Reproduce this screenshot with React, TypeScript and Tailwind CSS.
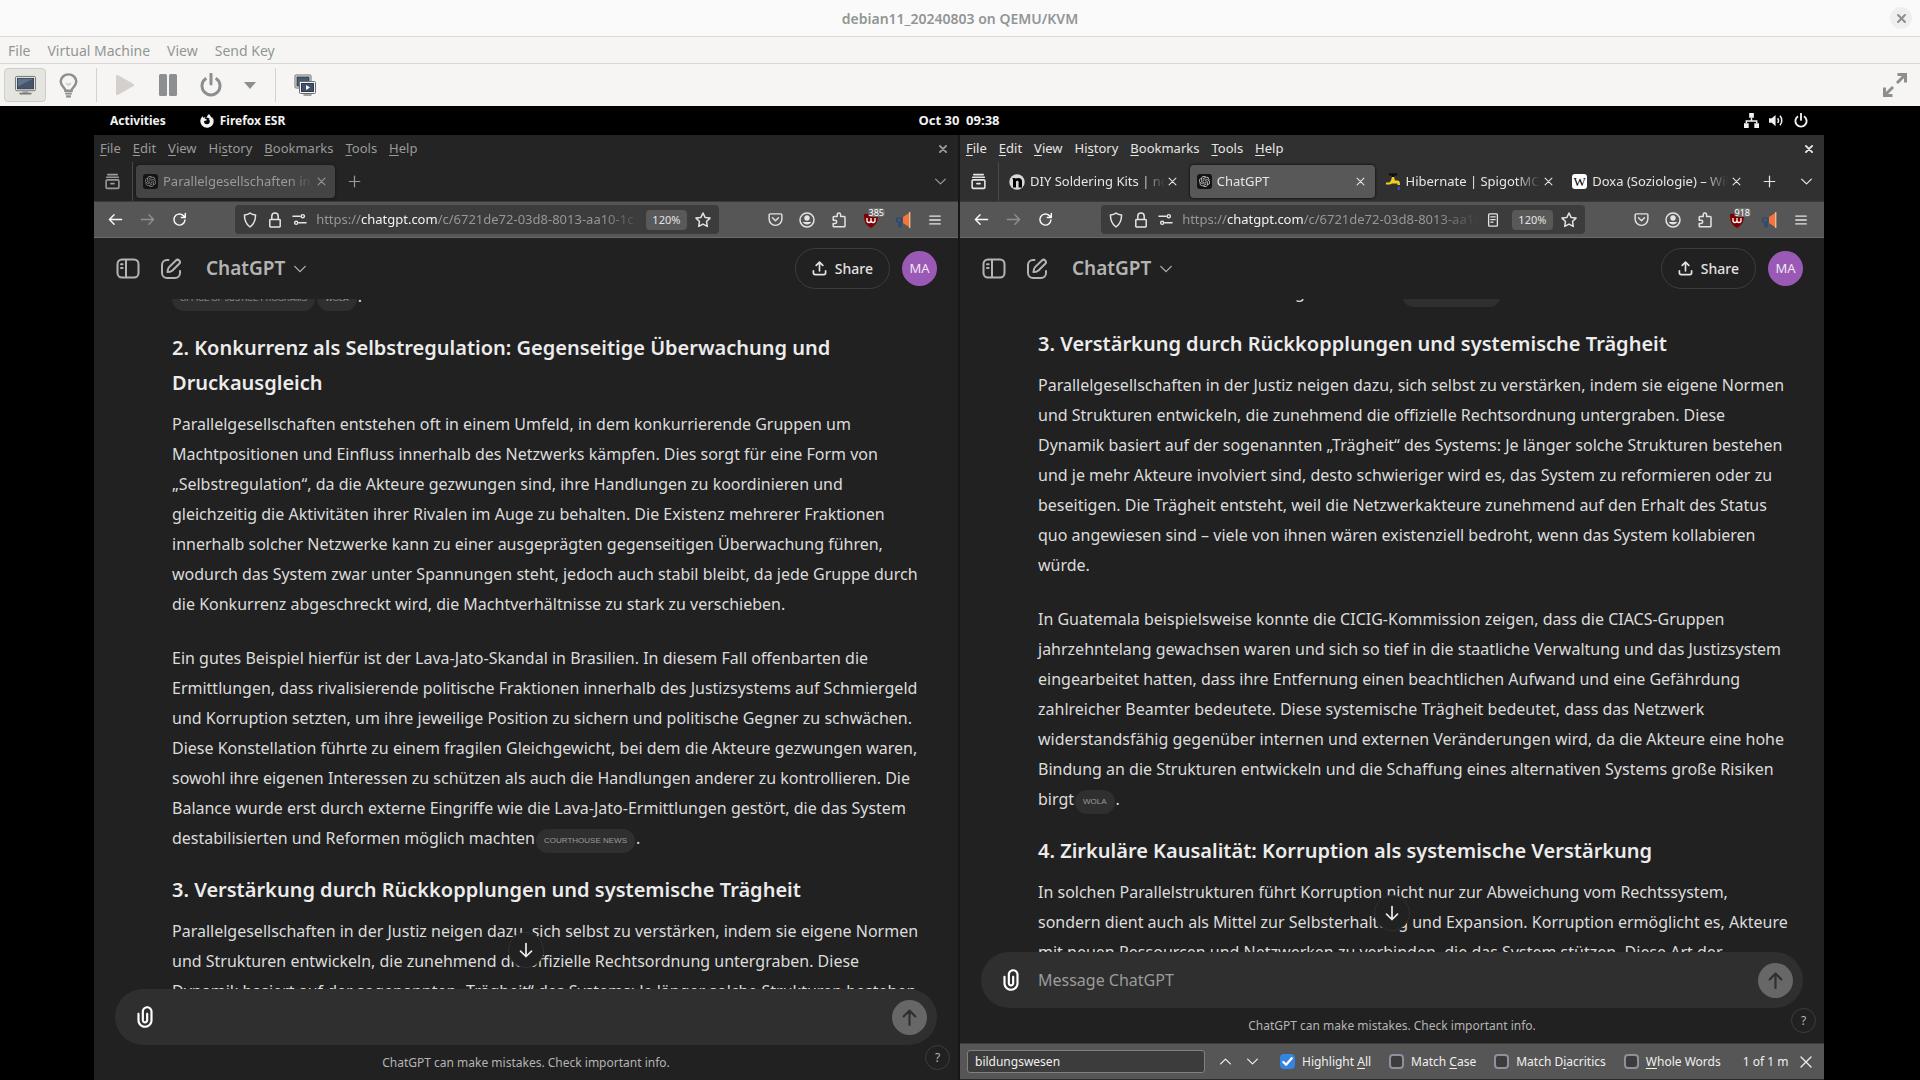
import type { ReactNode } from "react";
import { SiOpenai } from "react-icons/si";
import { FaFirefoxBrowser } from "react-icons/fa";

type IconProps = { className?: string };

/* ---------- Viewer toolbar icons ---------- */

const MonitorIcon = () => (
  <svg viewBox="0 0 24 22" className="h-[21px] w-[23px]">
    <rect x="1.5" y="1.5" width="21" height="15" rx="1.5" fill="#f4f4f2" stroke="#6f7270" />
    <rect x="3.5" y="3.5" width="17" height="11" fill="#44546b" stroke="#2e3a4c" />
    <path d="M4 4h16L4 12z" fill="#7286a0" opacity=".6" />
    <path d="M9 17h6v2H9z" fill="#a4a6a3" />
    <rect x="5.5" y="18.5" width="13" height="2" rx="1" fill="#777a77" />
  </svg>
);

const BulbIcon = () => (
  <svg viewBox="0 0 20 26" className="h-[25px] w-[19px]" fill="none" stroke="#8b8f8f" strokeWidth="2.6">
    <path d="M6.8 18.5c0-3-5-4.8-5-9.600a8.200 7.600 0 0 1 16.400 0c0 4.800-5 6.600-5 9.600z" />
    <path d="M6.500 21.500h7" strokeWidth="2" />
    <path d="M7.500 24.500h5" strokeWidth="2.400" />
    <path d="M7.500 10.500l2.500 2 2.500-2" stroke="#c9c9c7" strokeWidth="1.400" />
  </svg>
);

const ScreensIcon = () => (
  <svg viewBox="0 0 22 22" className="h-[22px] w-[22px]">
    <rect x="1" y="1" width="16" height="13" rx="1" fill="#f4f4f2" stroke="#6a6d6b" />
    <rect x="3" y="3" width="12" height="9" fill="#4a5a72" stroke="#2f3b4d" />
    <rect x="5.500" y="7.500" width="16" height="12" rx="1" fill="#f4f4f2" stroke="#6a6d6b" />
    <rect x="7.500" y="9.500" width="12" height="8" fill="#41516a" stroke="#2f3b4d" />
    <path d="M12 11v5l4-2.500z" fill="#fff" />
    <path d="M9.500 21h8" stroke="#8b8e8b" strokeWidth="1.600" />
  </svg>
);

const PowerIcon = ({ className }: IconProps) => (
  <svg viewBox="0 0 22 24" className={className} fill="none" stroke="currentColor" strokeWidth="3">
    <path d="M6.300 5.200a9 9 0 1 0 9.400 0" />
    <path d="M11 1v10" strokeLinecap="round" />
  </svg>
);

const ResizeIcon = () => (
  <svg viewBox="0 0 24 24" className="h-6 w-6" fill="none" stroke="#8b8f8f" strokeWidth="3">
    <path d="M14.500 1.500h8v8M22 2l-8 8" />
    <path d="M9.500 22.500h-8v-8M2 22l8-8" />
  </svg>
);

/* ---------- Desktop panel icons ---------- */

const NetworkIcon = () => (
  <svg viewBox="0 0 16 16" className="size-[15px]" fill="#f2f2f2">
    <path d="M5.500 0h5v5h-5zM0 11h5v5H0zM11 11h5v5h-5z" />
    <path d="M8 5v3M2.500 11V8.500h11V11" fill="none" stroke="#f2f2f2" strokeWidth="1.600" />
  </svg>
);

const VolumeIcon = () => (
  <svg viewBox="0 0 16 16" className="size-[15px]" fill="none" stroke="#f2f2f2" strokeWidth="1.600">
    <path d="M0 5.500h3L7 2v12l-4-3.500H0z" fill="#f2f2f2" stroke="none" />
    <path d="M9.200 5.500a4 4 0 0 1 0 5M11.700 3a7.500 7.500 0 0 1 0 10" />
  </svg>
);

/* ---------- Browser icons ---------- */

const Line = ({ d, className, width = 1.5 }: { d: string; className?: string; width?: number }) => (
  <svg
    viewBox="0 0 16 16"
    className={className}
    fill="none"
    stroke="currentColor"
    strokeWidth={width}
    strokeLinecap="round"
    strokeLinejoin="round"
  >
    <path d={d} />
  </svg>
);

const D = {
  view: "M3.500 1.500h9M2.500 4h11M3 6.500h10a1 1 0 0 1 1 1v6a1 1 0 0 1-1 1H3a1 1 0 0 1-1-1v-6a1 1 0 0 1 1-1zM6.500 10h3",
  back: "M14.500 8h-13M6.500 3l-5 5 5 5",
  forward: "M1.500 8h13M9.500 3l5 5-5 5",
  reload: "M13.800 8.500A5.900 5.900 0 1 1 11.800 3.600L14 5.600M14.200 1.500v4.300H9.900",
  shield: "M8 1c1.500 1.300 3.600 1.800 5.600 2-.1 5.500-1.600 9.200-5.600 12C4 12.200 2.500 8.500 2.400 3 4.400 2.800 6.500 2.300 8 1z",
  lock: "M3.500 7.500h9a.7.700 0 0 1 .7.700v6a.7.700 0 0 1-.7.700h-9a.7.700 0 0 1-.7-.7v-6a.7.700 0 0 1 .7-.7zM4.800 7.300V4.300a3.200 3.200 0 0 1 6.400 0v3",
  perms: "M1 4.500h7.500M7.500 11.500H15M11.500 2.800a1.700 1.700 0 1 1 0 3.400 1.700 1.700 0 0 1 0-3.400zM4.500 9.800a1.700 1.700 0 1 1 0 3.400 1.700 1.700 0 0 1 0-3.400z",
  reader: "M4 1h8a1 1 0 0 1 1 1v12a1 1 0 0 1-1 1H4a1 1 0 0 1-1-1V2a1 1 0 0 1 1-1zM5.500 4.500h5M5.500 7.500h5M5.500 10.500h2.500",
  star: "M8 1l2.100 4.400 4.900.7-3.500 3.400.8 4.900L8 12.100l-4.300 2.300.8-4.900L1 6.100l4.900-.7z",
  pocket: "M2.500 2h11a1.300 1.300 0 0 1 1.300 1.300V7.500a6.800 6.800 0 0 1-13.600 0V3.300A1.300 1.300 0 0 1 2.500 2zM4.800 6.200L8 9.300l3.200-3.100",
  puzzle: "M6.200 4.500V2.700a1.700 1.700 0 0 1 3.400 0v1.800h3.600a.8.800 0 0 1 .8.800V14a.8.800 0 0 1-.8.800H3a.8.800 0 0 1-.8-.8v-2.600h1.900a1.600 1.600 0 0 0 0-3.200H2.200V5.300a.8.800 0 0 1 .8-.8z",
  menu: "M2 3.500h12M2 8h12M2 12.500h12",
  down: "M2 5l6 6 6-6",
  up: "M2 11l6-6 6 6",
  cross: "M3 3l10 10M13 3L3 13",
  plus: "M8 1.500v13M1.500 8h13",
};

const AccountIcon = () => (
  <svg viewBox="0 0 16 16" className="size-4" fill="none" stroke="currentColor" strokeWidth="1.500">
    <circle cx="8" cy="8" r="7" />
    <circle cx="8" cy="6" r="2.700" fill="currentColor" stroke="none" />
    <path d="M3.600 10h8.800a5.200 5.200 0 0 1-8.800 0z" fill="currentColor" stroke="none" />
  </svg>
);

const BlockerIcon = () => (
  <svg viewBox="0 0 16 16" className="size-4">
    <path d="M8 0c2.500 1.800 5 2 7 2 0 8-1.500 10.500-7 14C2.500 12.500 1 10 1 2c2 0 4.500-.2 7-2z" fill="#800000" />
    <path d="M4 6v2.500a2 2 0 0 0 4 0V6m0 2.500a2 2 0 0 0 4 0V6" fill="none" stroke="#fff" strokeWidth="1.300" />
  </svg>
);

const MegaphoneIcon = () => (
  <svg viewBox="0 0 16 18" className="h-[18px] w-4">
    <path d="M8 6v6l6 4V2z" fill="#f2763c" />
    <path d="M14 1h1.400v16H14z" fill="#e9b89c" />
    <path d="M1 6.500h6.500v5H6.800v5H3.600l-.6-5H1z" fill="#2f4a73" />
    <circle cx="4.200" cy="9" r="1.600" fill="#565656" />
  </svg>
);

const NoiseIcon = () => (
  <svg viewBox="0 0 16 16" className="size-4 shrink-0">
    <circle cx="8" cy="8" r="7.700" fill="#d9d9d9" />
    <path d="M3.500 4h3v1.200c1-1.600 6.500-1.900 6.500 2v6.300H9.600V8c0-1.600-2.600-1.500-2.600.3v5.200H4V6z" fill="#000" />
  </svg>
);

const SpigotIcon = () => (
  <svg viewBox="0 0 16 18" className="h-[18px] w-4 shrink-0">
    <path d="M4 1.500h8M8 1v3" stroke="#0a0a0a" strokeWidth="2" />
    <path d="M1 11.500V9.500h3.500l1.500-2 1-3.500h2l1 3.500h2.500c1.800 0 2.500 1.300 2.500 4.500h-2.600v-1.500H7l-2 1z" fill="#f2cf1b" />
    <path d="M13.800 13.500v3.500" stroke="#3049d8" strokeWidth="2" />
  </svg>
);

const WikiIcon = () => (
  <span className="flex size-[15px] shrink-0 items-center justify-center rounded-[3px] bg-white font-['Liberation_Serif',serif] text-[13px] leading-none text-black">
    W
  </span>
);

const GptFavicon = ({ dim }: { dim?: boolean }) => (
  <span className={`flex size-[15px] shrink-0 items-center justify-center rounded-[3px] bg-[#141414] ${dim ? "text-[#8a8a8a]" : "text-[#d0d0d0]"}`}>
    <SiOpenai className="size-[11px]" />
  </span>
);

/* ---------- ChatGPT icons ---------- */

const SidebarIcon = () => (
  <svg viewBox="0 0 24 21" className="h-[21px] w-6" fill="none" stroke="currentColor" strokeWidth="2" strokeLinecap="round">
    <rect x="1.500" y="1.500" width="21" height="18" rx="4.500" />
    <path d="M10 2v17" />
    <path d="M5 6.200h1.600M5 10h1.600" />
  </svg>
);

const ComposeIcon = () => (
  <svg viewBox="0 0 22 22" className="size-[22px]" fill="none" stroke="currentColor" strokeWidth="2" strokeLinecap="round" strokeLinejoin="round">
    <path d="M8.500 2H7a5 5 0 0 0-5 5v8a5 5 0 0 0 5 5h8a5 5 0 0 0 5-5v-2" />
    <path d="M15.900 2.500a2.300 2.300 0 0 1 3.300 3.300l-6.500 6.500c-.8.800-1.700 1.200-2.700 1.400l-2.500.4.400-2.500c.2-1 .6-1.900 1.400-2.700z" />
  </svg>
);

const ShareIcon = () => (
  <svg viewBox="0 0 16 16" className="size-[15px]" fill="none" stroke="currentColor" strokeWidth="1.800" strokeLinecap="round" strokeLinejoin="round">
    <path d="M8 10.500V1.500M4.500 4.700L8 1.200l3.500 3.500M1.500 10.500v2a2 2 0 0 0 2 2h9a2 2 0 0 0 2-2v-2" />
  </svg>
);

const ClipIcon = () => (
  <svg viewBox="0 0 24 24" className="size-[26px]" fill="currentColor">
    <path d="M9 7C9 4.239 11.239 2 14 2C16.761 2 19 4.239 19 7V15C19 18.866 15.866 22 12 22C8.134 22 5 18.866 5 15V9C5 8.448 5.448 8 6 8C6.552 8 7 8.448 7 9V15C7 17.761 9.239 20 12 20C14.761 20 17 17.761 17 15V7C17 5.343 15.657 4 14 4C12.343 4 11 5.343 11 7V15C11 15.552 11.448 16 12 16C12.552 16 13 15.552 13 15V9C13 8.448 13.448 8 14 8C14.552 8 15 8.448 15 9V15C15 16.657 13.657 18 12 18C10.343 18 9 16.657 9 15V7Z" />
  </svg>
);

/* ---------- Browser window ---------- */

const MENUS: [string, string, string][] = [
  ["", "F", "ile"],
  ["", "E", "dit"],
  ["", "V", "iew"],
  ["Hi", "s", "tory"],
  ["", "B", "ookmarks"],
  ["", "T", "ools"],
  ["", "H", "elp"],
];

type TabInfo = { title: string; icon: ReactNode; selected?: boolean };

function Tab({ tab, focused }: { tab: TabInfo; focused: boolean }) {
  const bg = tab.selected ? (focused ? "bg-[#585858] shadow-[0_0_3px_#000]" : "bg-[#444] shadow-[0_0_3px_#111]") : "";
  return (
    <div className={`flex h-[33px] min-w-0 items-center rounded pr-1.5 pl-[7px] ${focused ? "flex-1" : "w-[199px]"} ${bg}`}>
      {tab.icon}
      <span className="ml-[5px] min-w-0 flex-1 overflow-hidden pt-px text-[13px] whitespace-nowrap [mask-image:linear-gradient(to_right,#000_calc(100%-24px),transparent)]">
        {tab.title}
      </span>
      <button aria-label={`Close ${tab.title}`} className="flex w-4 shrink-0 justify-center">
        <Line d={D.cross} className="size-[11px]" />
      </button>
    </div>
  );
}

function Browser({
  focused,
  tabs,
  url,
  reader,
  blocked,
  children,
}: {
  focused: boolean;
  tabs: TabInfo[];
  url: string;
  reader?: boolean;
  blocked: string;
  children: ReactNode;
}) {
  return (
    <section className="flex min-h-0 min-w-0 flex-col bg-[#212121]">
      <div className={focused ? "bg-[#303030] text-[#e6e6e6]" : "bg-[#242424] text-[#9a9a9a]"}>
        <div className="flex h-[27px] items-center gap-3 pr-[10px] pl-1.5 text-[13px]">
          {MENUS.map(([a, b, c]) => (
            <button key={b} className="whitespace-nowrap">
              {a}
              <span className="underline underline-offset-2">{b}</span>
              {c}
            </button>
          ))}
          <button aria-label="Close window" className="ml-auto">
            <Line d={D.cross} width={3} className="size-[10px]" />
          </button>
        </div>
        <div className="flex h-[39px] items-stretch">
          <button aria-label="Firefox View" className="flex w-[39px] items-center justify-center border-r border-[#484848] pr-0.5">
            <Line d={D.view} className="size-[17px]" />
          </button>
          <div className={`flex min-w-0 items-center gap-[3px] pl-[3px] ${focused ? "flex-1" : ""}`}>
            {tabs.map((t) => (
              <Tab key={t.title} tab={t} focused={focused} />
            ))}
          </div>
          <button aria-label="New tab" className="flex w-[38px] items-center justify-center">
            <Line d={D.plus} className="size-[13px]" />
          </button>
          <button aria-label="List all tabs" className="ml-auto flex w-9 items-center justify-center">
            <Line d={D.down} className="size-[13px]" />
          </button>
        </div>
      </div>

      <div className="flex h-[37px] shrink-0 items-center border-y border-t-[#3a3a3a] border-b-[#6a6a6a] bg-[#565656] pr-[7px] pl-[5px] text-[#e4e4e4]">
        <button aria-label="Back" className="flex w-8 justify-center text-[#fbfbfb]">
          <Line d={D.back} className="size-[15px]" />
        </button>
        <button aria-label="Forward" className="flex w-8 justify-center text-[#8e8e8e]">
          <Line d={D.forward} className="size-[15px]" />
        </button>
        <button aria-label="Reload" className="flex w-8 justify-center text-[#fbfbfb]">
          <Line d={D.reload} className="size-[15px]" />
        </button>
        <div className="flex-1" />
        <div className="flex h-[29px] min-w-0 flex-[12] items-center rounded bg-[#3c3c3c] pl-0.5">
          <span className="flex w-[25px] shrink-0 justify-center">
            <Line d={D.shield} className="size-4" />
          </span>
          <span className="flex w-[25px] shrink-0 justify-center">
            <Line d={D.lock} className="size-4" />
          </span>
          <span className="flex w-[25px] shrink-0 justify-center">
            <Line d={D.perms} className="size-[15px]" />
          </span>
          <div className="ml-1 min-w-0 flex-1 overflow-hidden text-[13px] whitespace-nowrap text-[#979797] [mask-image:linear-gradient(to_right,#000_calc(100%-40px),transparent)]">
            https://<span className="text-[#f2f2f2]">chatgpt.com</span>
            {url}
          </div>
          {reader && (
            <button aria-label="Reader view" className="flex w-[30px] shrink-0 justify-center">
              <Line d={D.reader} className="size-[14px]" />
            </button>
          )}
          <button className="ml-1 h-5 w-[41px] shrink-0 rounded-sm bg-[#595959] text-[11px] leading-5">120%</button>
          <button aria-label="Bookmark" className="flex w-8 shrink-0 justify-center">
            <Line d={D.star} className="size-4" />
          </button>
        </div>
        <div className="flex-1" />
        <button aria-label="Pocket" className="flex w-8 justify-center">
          <Line d={D.pocket} className="size-[15px]" />
        </button>
        <button aria-label="Account" className="flex w-8 justify-center">
          <AccountIcon />
        </button>
        <button aria-label="Extensions" className="flex w-8 justify-center">
          <Line d={D.puzzle} className="size-4" />
        </button>
        <button aria-label="Content blocker" className="relative flex w-8 justify-center">
          <BlockerIcon />
          <span className="absolute -top-1 right-0.5 rounded-sm bg-[#6b6b6b] px-px text-[9px] leading-[9px] text-white">{blocked}</span>
        </button>
        <button aria-label="Announcements" className="flex w-8 justify-center">
          <MegaphoneIcon />
        </button>
        <button aria-label="Application menu" className="flex w-8 justify-center">
          <Line d={D.menu} className="size-[14px]" />
        </button>
      </div>
      {children}
    </section>
  );
}

/* ---------- Chat page ---------- */

const Source = ({ children }: { children: ReactNode }) => (
  <a
    href="#source"
    className="mx-px inline-block h-6 rounded-xl bg-[#2f2f2f] px-2 align-bottom font-['Liberation_Sans',sans-serif] text-[8px] leading-6 text-[#9b9b9b]"
  >
    {children}
  </a>
);

const Lines = ({ lines, tail }: { lines: string[]; tail?: ReactNode }) => (
  <p className="text-[16px] leading-[30px] text-[#dcdcdc]">
    {lines.map((l, i) => (
      <span key={l} className={i < lines.length - 1 ? "block" : ""}>
        {l}
      </span>
    ))}
    {tail}
  </p>
);

const Heading = ({ children }: { children: ReactNode }) => (
  <h3 className="mt-[19px] mb-[9px] text-[20px] leading-[35px] font-semibold text-[#ececec]">{children}</h3>
);

function Chat({ placeholder, children }: { placeholder?: string; children: ReactNode }) {
  return (
    <div className="flex min-h-0 flex-1 flex-col">
      <header className="flex h-[61px] shrink-0 items-center pr-[21px] pl-[22px] text-[#b4b4b4]">
        <button aria-label="Open sidebar">
          <SidebarIcon />
        </button>
        <button aria-label="New chat" className="ml-5">
          <ComposeIcon />
        </button>
        <button className="ml-6 flex items-center gap-2 text-[19px] font-semibold">
          ChatGPT
          <Line d={D.down} className="size-[14px]" />
        </button>
        <button className="ml-auto flex h-[41px] items-center gap-2 rounded-full border border-[#3d3d3d] px-4 text-[14px] font-medium text-[#e3e3e3]">
          <ShareIcon />
          Share
        </button>
        <button aria-label="Account MA" className="ml-3 size-[35px] rounded-full bg-[#9b59b6] text-[13px] text-[#f0e6f4]">
          MA
        </button>
      </header>

      <main className="min-h-0 flex-1 overflow-hidden pl-[78px] whitespace-nowrap">{children}</main>

      <div className="relative mx-[21px] flex h-14 shrink-0 items-center rounded-full bg-[#2f2f2f] pr-[10px] pl-[17px]">
        <button
          aria-label="Scroll to bottom"
          className="absolute -top-[57px] left-1/2 flex size-9 -translate-x-1/2 items-center justify-center rounded-full border border-[#313131] bg-[#212121] text-[#ececec]"
        >
          <Line d="M8 1.500v13M2.500 9.200L8 14.500l5.500-5.300" className="size-4" width={1.7} />
        </button>
        <button aria-label="Attach files" className="text-white">
          <ClipIcon />
        </button>
        <input
          aria-label="Message ChatGPT"
          placeholder={placeholder}
          className="ml-[14px] min-w-0 flex-1 bg-transparent text-[16px] text-[#ececec] outline-none placeholder:text-[#9b9b9b]"
        />
        <button aria-label="Send" className="flex size-[35px] items-center justify-center rounded-full bg-[#676767] text-[#2f2f2f]">
          <Line d="M8 15V1.500M2.500 7L8 1.500 13.500 7" width={2} className="size-[17px]" />
        </button>
      </div>
      <div className="relative flex h-[35px] shrink-0 items-center justify-center text-[12px] text-[#b4b4b4]">
        ChatGPT can make mistakes. Check important info.
        <button aria-label="Help" className="absolute top-0 right-2 size-[25px] rounded-full border border-[#3d3d3d] text-[12px]">
          ?
        </button>
      </div>
    </div>
  );
}

const FEEDBACK = [
  "Parallelgesellschaften in der Justiz neigen dazu, sich selbst zu verstärken, indem sie eigene Normen",
  "und Strukturen entwickeln, die zunehmend die offizielle Rechtsordnung untergraben. Diese",
  "Dynamik basiert auf der sogenannten „Trägheit“ des Systems: Je länger solche Strukturen bestehen",
];

function Check({ label, defaultChecked }: { label: ReactNode; defaultChecked?: boolean }) {
  return (
    <label className="flex shrink-0 items-center gap-[7px] whitespace-nowrap">
      <span className="relative flex size-[15px]">
        <input
          type="checkbox"
          defaultChecked={defaultChecked}
          className="peer size-[15px] appearance-none rounded-sm border-2 border-[#8f8f9d] bg-[#3c3c3c] checked:border-[#3584e4] checked:bg-[#3584e4]"
        />
        <Line d="M3.500 8.500l3 3 6-7" width={2.4} className="pointer-events-none absolute inset-0 hidden size-[15px] text-white peer-checked:block" />
      </span>
      <span>{label}</span>
    </label>
  );
}

const U = ({ children }: { children: ReactNode }) => <span className="underline underline-offset-2">{children}</span>;

function FindBar() {
  return (
    <div className="flex h-[37px] shrink-0 items-center overflow-hidden border-y border-t-[#3a3a3a] border-b-[#2a2a2a] bg-[#565656] pr-2.5 pl-[7px] text-[12px] text-[#f0f0f0]">
      <input
        aria-label="Find in page"
        defaultValue="bildungswesen"
        className="h-[23px] w-[238px] min-w-0 rounded-[3px] border border-[#808080] bg-[#3c3c3c] px-[7px] text-[12px] outline-none"
      />
      <button aria-label="Previous match" className="ml-[7px] flex w-[27px] justify-center">
        <Line d={D.up} className="size-[13px]" />
      </button>
      <button aria-label="Next match" className="flex w-[27px] justify-center">
        <Line d={D.down} className="size-[13px]" />
      </button>
      <div className="ml-[14px] flex gap-[18px]">
        <Check defaultChecked label={<>Highlight <U>A</U>ll</>} />
        <Check label={<>Match <U>C</U>ase</>} />
        <Check label={<>Match D<U>i</U>acritics</>} />
        <Check label={<><U>W</U>hole Words</>} />
      </div>
      <span className="ml-[22px] min-w-0 flex-1 overflow-hidden whitespace-nowrap">1 of 1 match</span>
      <button aria-label="Close find bar" className="ml-[10px] shrink-0">
        <Line d={D.cross} className="size-4" width={1.3} />
      </button>
    </div>
  );
}

/* ---------- Page ---------- */

const ToolSep = () => <span className="h-[34px] w-px bg-[#d5d3d0]" />;

export default function App() {
  return (
    <div className="flex h-screen flex-col overflow-hidden bg-black font-['Noto_Sans',sans-serif]">
      <div className="flex h-[37px] shrink-0 items-center border-b border-[#d8d8d6] bg-[#fafafa] px-2">
        <span className="w-[22px]" />
        <h1 className="flex-1 text-center text-[14px] font-semibold text-[#929595]">debian11_20240803 on QEMU/KVM</h1>
        <button aria-label="Close" className="flex size-[22px] items-center justify-center rounded-full bg-[#efefee] text-[#8b8f8f]">
          <Line d={D.cross} width={3} className="size-[11px]" />
        </button>
      </div>
      <nav className="flex h-[27px] shrink-0 items-center gap-[17px] border-b border-[#d8d8d6] bg-[#f6f5f3] px-2 text-[14px] text-[#929595]">
        <button>File</button>
        <button>Virtual Machine</button>
        <button>View</button>
        <button>Send Key</button>
      </nav>
      <div className="flex h-[42px] shrink-0 items-center bg-[#f6f5f3] px-1 text-[#8b8f8f]">
        <button aria-label="Console" className="flex h-[34px] w-[42px] items-center justify-center rounded border border-[#d3ccc6] bg-[#e4e5df]">
          <MonitorIcon />
        </button>
        <button aria-label="Details" className="mr-[6px] flex w-[44px] items-center justify-center">
          <BulbIcon />
        </button>
        <ToolSep />
        <button aria-label="Run" className="ml-[7px] flex w-[42px] items-center justify-center">
          <svg viewBox="0 0 20 22" className="h-[22px] w-5" fill="#d5d0cc">
            <path d="M1 2.500C1 1 2 .6 3.200 1.200l15 8.500c1.200.7 1.200 1.900 0 2.600l-15 8.500C2 21.400 1 21 1 19.500z" />
          </svg>
        </button>
        <button aria-label="Pause" className="flex w-[43px] items-center justify-center">
          <svg viewBox="0 0 18 22" className="h-[22px] w-[18px]" fill="currentColor">
            <rect width="8" height="22" rx="1.500" />
            <rect x="10" width="8" height="22" rx="1.500" />
          </svg>
        </button>
        <button aria-label="Shut down" className="flex w-[43px] items-center justify-center">
          <PowerIcon className="h-6 w-[22px]" />
        </button>
        <button aria-label="Power options" className="flex w-[35px] items-center justify-center">
          <svg viewBox="0 0 12 7" className="h-[7px] w-3" fill="currentColor">
            <path d="M0 0h12L6 7z" />
          </svg>
        </button>
        <span className="w-2" />
        <ToolSep />
        <button aria-label="Snapshots" className="ml-[7px] flex w-[44px] items-center justify-center">
          <ScreensIcon />
        </button>
        <button aria-label="Fullscreen" className="mr-[9px] ml-auto">
          <ResizeIcon />
        </button>
      </div>

      <div className="flex min-h-0 flex-1 flex-col bg-black pr-24 pl-[94px]">
        <div className="grid h-[29px] shrink-0 grid-cols-3 items-center px-4 text-[12px] font-bold text-[#f2f2f2]">
          <div className="flex items-center">
            <button className="font-bold">Activities</button>
            <button className="ml-[34px] flex items-center gap-[6px]">
              <FaFirefoxBrowser className="size-[14px]" />
              Firefox ESR
            </button>
          </div>
          <time className="text-center text-[13px] whitespace-pre">Oct 30  09:38</time>
          <div className="flex items-center justify-end gap-[10px]">
            <NetworkIcon />
            <VolumeIcon />
            <PowerIcon className="h-[15px] w-[14px]" />
          </div>
        </div>

        <div className="grid min-h-0 flex-1 grid-cols-2 gap-[2px] bg-[#171717]">
          <Browser
            focused={false}
            tabs={[{ title: "Parallelgesellschaften in d", icon: <GptFavicon dim />, selected: true }]}
            url="/c/6721de72-03d8-8013-aa10-1c"
            blocked="385"
          >
            <Chat>
              <div className="-mt-[18px]">
                <p className="text-[16px] leading-[30px] text-[#dcdcdc]">
                  <span className="-ml-px">
                    <Source>OFFICE OF JUSTICE PROGRAMS</Source>
                    <Source>WOLA</Source>.
                  </span>
                </p>
                <Heading>
                  2. Konkurrenz als Selbstregulation: Gegenseitige Überwachung und
                  <br />
                  Druckausgleich
                </Heading>
                <Lines
                  lines={[
                    "Parallelgesellschaften entstehen oft in einem Umfeld, in dem konkurrierende Gruppen um",
                    "Machtpositionen und Einfluss innerhalb des Netzwerks kämpfen. Dies sorgt für eine Form von",
                    "„Selbstregulation“, da die Akteure gezwungen sind, ihre Handlungen zu koordinieren und",
                    "gleichzeitig die Aktivitäten ihrer Rivalen im Auge zu behalten. Die Existenz mehrerer Fraktionen",
                    "innerhalb solcher Netzwerke kann zu einer ausgeprägten gegenseitigen Überwachung führen,",
                    "wodurch das System zwar unter Spannungen steht, jedoch auch stabil bleibt, da jede Gruppe durch",
                    "die Konkurrenz abgeschreckt wird, die Machtverhältnisse zu stark zu verschieben.",
                  ]}
                />
                <div className="h-6" />
                <Lines
                  lines={[
                    "Ein gutes Beispiel hierfür ist der Lava-Jato-Skandal in Brasilien. In diesem Fall offenbarten die",
                    "Ermittlungen, dass rivalisierende politische Fraktionen innerhalb des Justizsystems auf Schmiergeld",
                    "und Korruption setzten, um ihre jeweilige Position zu sichern und politische Gegner zu schwächen.",
                    "Diese Konstellation führte zu einem fragilen Gleichgewicht, bei dem die Akteure gezwungen waren,",
                    "sowohl ihre eigenen Interessen zu schützen als auch die Handlungen anderer zu kontrollieren. Die",
                    "Balance wurde erst durch externe Eingriffe wie die Lava-Jato-Ermittlungen gestört, die das System",
                    "destabilisierten und Reformen möglich machten",
                  ]}
                  tail={<><Source>COURTHOUSE NEWS</Source>.</>}
                />
                <Heading>3. Verstärkung durch Rückkopplungen und systemische Trägheit</Heading>
                <Lines lines={FEEDBACK} />
              </div>
            </Chat>
          </Browser>

          <Browser
            focused
            tabs={[
              { title: "DIY Soldering Kits | nois", icon: <NoiseIcon /> },
              { title: "ChatGPT", icon: <GptFavicon />, selected: true },
              { title: "Hibernate | SpigotMC -", icon: <SpigotIcon /> },
              { title: "Doxa (Soziologie) – Wik", icon: <WikiIcon /> },
            ]}
            url="/c/6721de72-03d8-8013-aa10"
            reader
            blocked="918"
          >
            <Chat placeholder="Message ChatGPT">
              <div className="-mt-[22px]">
                <Lines lines={["destabilisierten und Reformen möglich machten"]} tail={<><Source>COURTHOUSE NEWS</Source>.</>} />
                <Heading>3. Verstärkung durch Rückkopplungen und systemische Trägheit</Heading>
                <Lines
                  lines={[
                    ...FEEDBACK,
                    "und je mehr Akteure involviert sind, desto schwieriger wird es, das System zu reformieren oder zu",
                    "beseitigen. Die Trägheit entsteht, weil die Netzwerkakteure zunehmend auf den Erhalt des Status",
                    "quo angewiesen sind – viele von ihnen wären existenziell bedroht, wenn das System kollabieren",
                    "würde.",
                  ]}
                />
                <div className="h-6" />
                <Lines
                  lines={[
                    "In Guatemala beispielsweise konnte die CICIG-Kommission zeigen, dass die CIACS-Gruppen",
                    "jahrzehntelang gewachsen waren und sich so tief in die staatliche Verwaltung und das Justizsystem",
                    "eingearbeitet hatten, dass ihre Entfernung einen beachtlichen Aufwand und eine Gefährdung",
                    "zahlreicher Beamter bedeutete. Diese systemische Trägheit bedeutet, dass das Netzwerk",
                    "widerstandsfähig gegenüber internen und externen Veränderungen wird, da die Akteure eine hohe",
                    "Bindung an die Strukturen entwickeln und die Schaffung eines alternativen Systems große Risiken",
                    "birgt",
                  ]}
                  tail={<><Source>WOLA</Source>.</>}
                />
                <Heading>4. Zirkuläre Kausalität: Korruption als systemische Verstärkung</Heading>
                <Lines
                  lines={[
                    "In solchen Parallelstrukturen führt Korruption nicht nur zur Abweichung vom Rechtssystem,",
                    "sondern dient auch als Mittel zur Selbsterhaltung und Expansion. Korruption ermöglicht es, Akteure",
                    "mit neuen Ressourcen und Netzwerken zu verbinden, die das System stützen. Diese Art der",
                  ]}
                />
              </div>
            </Chat>
            <FindBar />
          </Browser>
        </div>
      </div>
    </div>
  );
}
